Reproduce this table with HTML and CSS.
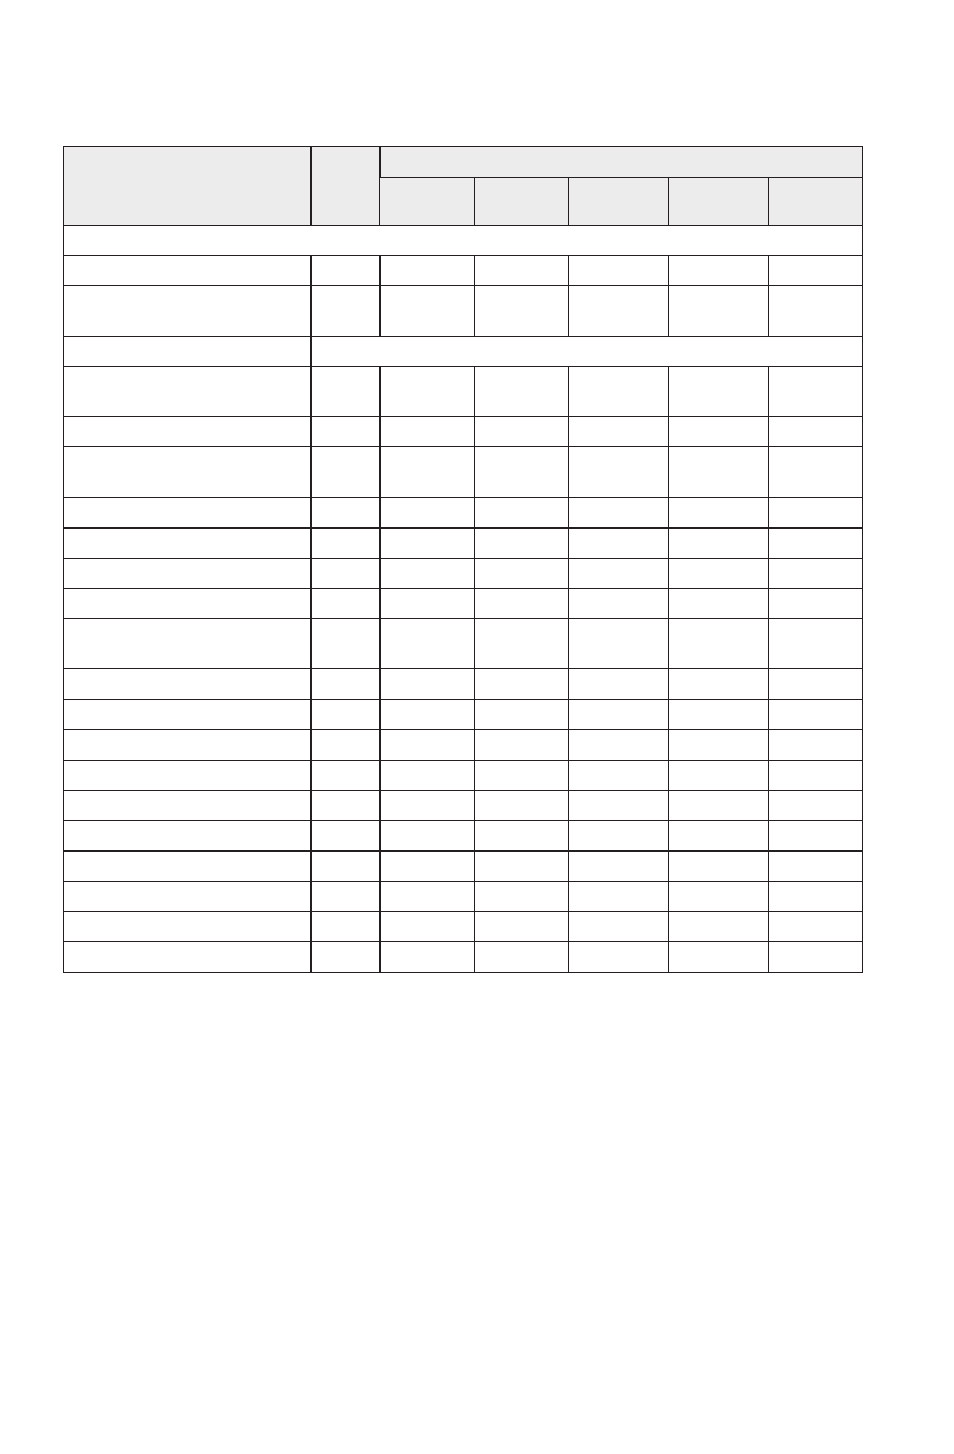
FILE: index.html
```html
<!DOCTYPE html>
<html lang="en">
<head>
<meta charset="utf-8">
<title>Table</title>
<link rel="stylesheet" href="styles.css">
</head>
<body>
<div class="sheet" role="table">
  <div class="row head" role="row">
    <div class="c h tall" role="columnheader"></div>
    <div class="c h tall k" role="columnheader"></div>
    <div class="c h wide5 k" role="columnheader"></div>
  </div>
  <div class="row head sub" role="row">
    <div class="c h" role="columnheader"></div>
    <div class="c h" role="columnheader"></div>
    <div class="c h" role="columnheader"></div>
    <div class="c h" role="columnheader"></div>
    <div class="c h" role="columnheader"></div>
  </div>

  <div class="row" role="row"><div class="c all" role="cell"></div></div>

  <div class="row std" role="row"><div class="c"></div><div class="c"></div><div class="c"></div><div class="c"></div><div class="c"></div><div class="c"></div><div class="c"></div></div>
  <div class="row std" role="row"><div class="c"></div><div class="c"></div><div class="c"></div><div class="c"></div><div class="c"></div><div class="c"></div><div class="c"></div></div>
  <div class="row std" role="row"><div class="c"></div><div class="c span6"></div></div>
  <div class="row std" role="row"><div class="c"></div><div class="c"></div><div class="c"></div><div class="c"></div><div class="c"></div><div class="c"></div><div class="c"></div></div>
  <div class="row std" role="row"><div class="c"></div><div class="c"></div><div class="c"></div><div class="c"></div><div class="c"></div><div class="c"></div><div class="c"></div></div>
  <div class="row std" role="row"><div class="c"></div><div class="c"></div><div class="c"></div><div class="c"></div><div class="c"></div><div class="c"></div><div class="c"></div></div>
  <div class="row std" role="row"><div class="c"></div><div class="c"></div><div class="c"></div><div class="c"></div><div class="c"></div><div class="c"></div><div class="c"></div></div>

  <div class="row std thick" role="row"><div class="c"></div><div class="c"></div><div class="c"></div><div class="c"></div><div class="c"></div><div class="c"></div><div class="c"></div></div>
  <div class="row std" role="row"><div class="c"></div><div class="c"></div><div class="c"></div><div class="c"></div><div class="c"></div><div class="c"></div><div class="c"></div></div>
  <div class="row std" role="row"><div class="c"></div><div class="c"></div><div class="c"></div><div class="c"></div><div class="c"></div><div class="c"></div><div class="c"></div></div>
  <div class="row std" role="row"><div class="c"></div><div class="c"></div><div class="c"></div><div class="c"></div><div class="c"></div><div class="c"></div><div class="c"></div></div>
  <div class="row std" role="row"><div class="c"></div><div class="c"></div><div class="c"></div><div class="c"></div><div class="c"></div><div class="c"></div><div class="c"></div></div>
  <div class="row std" role="row"><div class="c"></div><div class="c"></div><div class="c"></div><div class="c"></div><div class="c"></div><div class="c"></div><div class="c"></div></div>
  <div class="row std" role="row"><div class="c"></div><div class="c"></div><div class="c"></div><div class="c"></div><div class="c"></div><div class="c"></div><div class="c"></div></div>
  <div class="row std" role="row"><div class="c"></div><div class="c"></div><div class="c"></div><div class="c"></div><div class="c"></div><div class="c"></div><div class="c"></div></div>
  <div class="row std" role="row"><div class="c"></div><div class="c"></div><div class="c"></div><div class="c"></div><div class="c"></div><div class="c"></div><div class="c"></div></div>
  <div class="row std" role="row"><div class="c"></div><div class="c"></div><div class="c"></div><div class="c"></div><div class="c"></div><div class="c"></div><div class="c"></div></div>

  <div class="row std thick" role="row"><div class="c"></div><div class="c"></div><div class="c"></div><div class="c"></div><div class="c"></div><div class="c"></div><div class="c"></div></div>
  <div class="row std" role="row"><div class="c"></div><div class="c"></div><div class="c"></div><div class="c"></div><div class="c"></div><div class="c"></div><div class="c"></div></div>
  <div class="row std" role="row"><div class="c"></div><div class="c"></div><div class="c"></div><div class="c"></div><div class="c"></div><div class="c"></div><div class="c"></div></div>
  <div class="row std" role="row"><div class="c"></div><div class="c"></div><div class="c"></div><div class="c"></div><div class="c"></div><div class="c"></div><div class="c"></div></div>
</div>
</body>
</html>
```

FILE: styles.css
```css
html, body {
  margin: 0;
  padding: 0;
  background: #ffffff;
}

body {
  font-family: "Liberation Sans", Arial, sans-serif;
  color: #231f20;
  min-height: 1454px;
}

.sheet {
  display: grid;
  grid-template-columns: 247px 69px 95px 94px 100px 100px 94px;
  grid-template-rows:
    31px 48px
    30px 30px 51px 30px 50px 30px 51px 30px
    31px 30px 30px 50px 31px 30px 31px 30px 30px 30px
    31px 30px 30px 31px;
  width: 800px;
  box-sizing: border-box;
  margin: 146px 0 0 63px;
  border-right: 1px solid #231f20;
  border-bottom: 1px solid #231f20;
}

.row {
  display: contents;
}

.c {
  box-sizing: border-box;
  border-left: 1px solid #231f20;
  border-top: 1px solid #231f20;
  background: #ffffff;
}

.h {
  background: #ececec;
}

.tall {
  grid-row: span 2;
}

.wide5 {
  grid-column: span 5;
}

.k {
  border-left-width: 2px;
}

.all {
  grid-column: 1 / -1;
}

.span6 {
  grid-column: span 6;
}

.std > :nth-child(2),
.std > :nth-child(3) {
  border-left-width: 2px;
}

.thick > .c {
  border-top-width: 2px;
}
```
